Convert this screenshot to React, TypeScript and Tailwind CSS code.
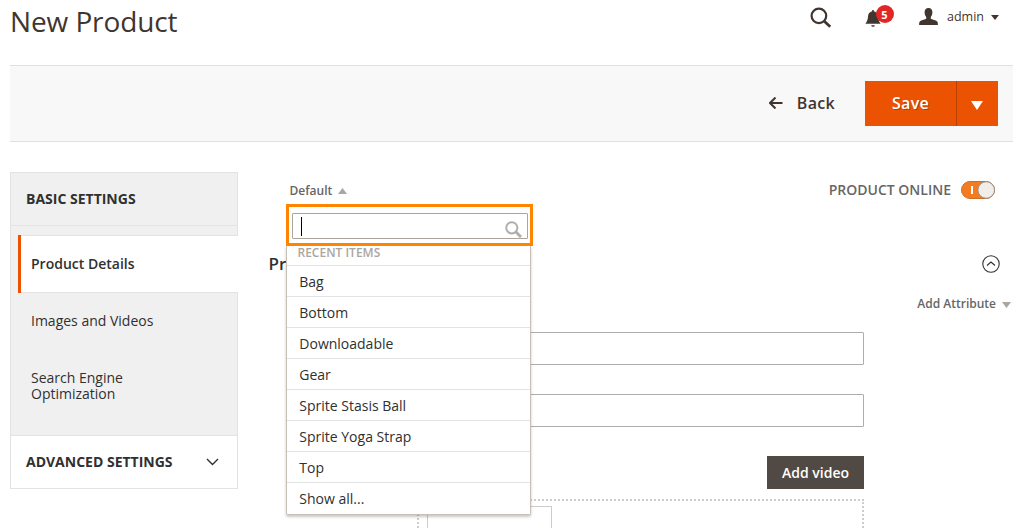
import React from "react";

const recentItems = [
  "Bag",
  "Bottom",
  "Downloadable",
  "Gear",
  "Sprite Stasis Ball",
  "Sprite Yoga Strap",
  "Top",
  "Show all...",
];

function Header() {
  return (
    <header className="flex h-[65px] items-start pl-[10px]">
      <h1 className="mt-px text-[28px] leading-[40px] tracking-[-0.1px] text-[#41362f]">New Product</h1>
      <div className="ml-auto flex items-start">
        <svg className="mt-[7px] h-[22px] w-[22px]" viewBox="0 0 22 22" fill="none" stroke="#41362f">
          <circle cx="8.900" cy="8.900" r="7.300" strokeWidth="2.200" />
          <path d="M14 14L20.200 19.800" strokeWidth="2.800" />
        </svg>
        <div className="relative ml-[33px] mt-[9px] h-[19px] w-[17px]">
          <svg className="h-[19px] w-[17px]" viewBox="0 0 17 19" fill="#41362f">
            <path d="M7.200 1h1.600v1.200c2.700.5 4 2.600 4.200 5.200.2 3 .8 4.800 2.600 7.400H.4c1.900-2.600 2.400-4.400 2.600-7.400.2-2.600 1.500-4.700 4.200-5.200z" />
            <path d="M6.200 16.300h3.600c-.3 1-.8 1.500-1.800 1.500s-1.500-.5-1.800-1.500z" />
          </svg>
          <span className="absolute left-[10.500px] top-[-4px] flex h-[18px] w-[18px] items-center justify-center rounded-full bg-[#e22626] text-[11px] font-bold leading-none text-white">
            5
          </span>
        </div>
        <svg className="ml-[37px] mt-[8px] h-[17px] w-[19px]" viewBox="0 0 19 17" fill="#41362f">
          <path d="M9.500 0c2.700 0 3.900 1.600 3.900 4.300 0 2.300-.7 3.700-1.600 4.700v1.800c.6.8 5.700 1.300 6.700 3.200.3.700.4 1.600.4 3H.1c0-1.400.1-2.300.4-3 1-1.900 6.100-2.400 6.700-3.200V9C6.300 8 5.600 6.600 5.600 4.300 5.600 1.600 6.800 0 9.500 0z" />
        </svg>
        <span className="ml-[9px] mt-[8px] text-[12.500px] leading-[18px] text-[#41362f]">admin</span>
        <svg className="ml-[7px] mr-[22px] mt-[15px] h-[5px] w-[8px]" viewBox="0 0 8 5" fill="#41362f">
          <path d="M0 0h8L4 5z" />
        </svg>
      </div>
    </header>
  );
}

function Toolbar() {
  return (
    <div className="ml-[10px] mr-[8px] flex h-[77px] items-center justify-end border-y border-[#e0e0e0] bg-[#f8f8f8] pr-[15px]">
      <button className="mb-[2px] mr-[30px] flex items-center text-[16px] font-semibold tracking-[0.3px] text-[#41362f]">
        <svg className="mr-[14px] h-[12px] w-[14px]" viewBox="0 0 14 12" fill="none" stroke="#41362f" strokeWidth="2">
          <path d="M0.500 6h13M6.500 0.500L1 6l5.500 5.500" />
        </svg>
        Back
      </button>
      <div className="flex h-[45px] bg-[#eb5202] text-white">
        <button className="w-[91px] pb-[2px] text-[16px] font-semibold tracking-[0.3px] [text-shadow:1px_1px_0_rgba(0,0,0,0.25)]">
          Save
        </button>
        <button className="flex w-[42px] items-center justify-center border-l border-[#b84002] pr-[2px]">
          <svg className="mt-[3px] h-[9px] w-[12px]" viewBox="0 0 12 9" fill="#fff">
            <path d="M0 0h12L6 9z" />
          </svg>
        </button>
      </div>
    </div>
  );
}

function Sidebar() {
  return (
    <nav className="ml-[10px] mt-[30px] flex h-[317px] w-[228px] flex-col text-[14px] text-[#303030]">
      <div className="flex h-[54px] items-center border border-[#e3e3e3] bg-[#f0f0f0] pb-[2px] pl-[15px] text-[14px] font-bold">
        BASIC SETTINGS
      </div>
      <div className="h-[9px] border-x border-[#e3e3e3] bg-[#f0f0f0]" />
      <div className="relative flex h-[57px] border-l border-[#e3e3e3] bg-[#f0f0f0] pl-[7px]">
        <div className="flex h-[58px] flex-1 items-center border-l-[3px] border-[#eb5202] bg-white pb-[2px] pl-[10px] font-semibold shadow-[inset_0_1px_0_#e3e3e3,inset_0_-1px_0_#e3e3e3]">
          Product Details
        </div>
      </div>
      <div className="flex-1 border-x border-[#e3e3e3] bg-[#f0f0f0] pl-[20px]">
        <div className="mt-[20px] leading-[18px]">Images and Videos</div>
        <div className="mt-[40px] w-[120px] leading-[16px]">Search Engine Optimization</div>
      </div>
      <div className="flex h-[54px] items-center border border-[#e3e3e3] bg-white pl-[15px] pr-[18px] text-[14px] font-bold">
        <span className="mb-[2px]">ADVANCED SETTINGS</span>
        <svg className="ml-auto h-[8px] w-[13px]" viewBox="0 0 13 8" fill="none" stroke="#303030" strokeWidth="1.400">
          <path d="M1 1l5.500 5.500L12 1" />
        </svg>
      </div>
    </nav>
  );
}

function AttributeSetMenu() {
  return (
    <div className="absolute left-[18px] top-[62px] w-[247px]">
      <div className="relative z-10 h-[42px] border-[3px] border-[#ff8400] bg-white px-[2px] pt-[6px] pl-[3px]">
        <div className="flex h-[26px] items-center rounded-[1px] border border-[#aaa49b] pl-[8px] pr-[5px]">
          <span className="h-[19px] w-px bg-black" />
          <svg className="ml-auto mt-[6px] h-[17px] w-[17px]" viewBox="0 0 17 17" fill="none" stroke="#b0aeaa">
            <circle cx="6.800" cy="6.800" r="5.600" strokeWidth="2" />
            <path d="M11 11l5 5" strokeWidth="3" />
          </svg>
        </div>
      </div>
      <div className="h-[269px] w-[245px] rounded-b-[2px] border border-t-0 border-[#c8c0b4] bg-white shadow-[0_2px_3px_rgba(0,0,0,0.22)]">
        <div className="h-[20px] border-b border-[#e3e3e3] pl-[10.500px] text-[12px] font-semibold leading-[14px] text-[#aaa6a0]">
          RECENT ITEMS
        </div>
        {recentItems.map((item) => (
          <div
            key={item}
            className="h-[31px] border-b border-[#e3e3e3] pl-[12.300px] text-[14px] leading-[31px] text-[#303030] last:border-b-0"
          >
            {item}
          </div>
        ))}
      </div>
    </div>
  );
}

function ProductForm() {
  return (
    <main className="relative ml-[30px] flex w-[745px] flex-col text-[#303030]">
      <div className="flex h-[96px] items-start">
        <button className="ml-[21.500px] mt-[40px] flex items-center text-[12px] font-semibold leading-[18px] text-[#666]">
          Default
          <svg className="ml-[6px] h-[6px] w-[9px]" viewBox="0 0 9 6" fill="#aaa6a0">
            <path d="M0 6h9L4.500 0z" />
          </svg>
        </button>
        <div className="ml-auto mr-[18px] mt-[39px] flex h-[18px] items-center text-[14px] font-semibold text-[#666]">
          <span className="mb-[2px]">PRODUCT ONLINE</span>
          <svg className="ml-[10px] h-[18px] w-[34px]" viewBox="0 0 34 18">
            <rect x="0.500" y="0.500" width="33" height="17" rx="8.500" fill="#f47b20" stroke="#cf6d24" />
            <rect x="10" y="5" width="2" height="8" fill="#fff" />
            <circle cx="25.200" cy="9" r="8.300" fill="#f1eee9" stroke="#96908a" />
          </svg>
        </div>
      </div>
      <div className="flex h-[50px] items-center">
        <h2 className="mt-[2px] pl-[0.500px] text-[17px] font-semibold">Pr</h2>
        <svg className="ml-auto mr-[13px] mt-px h-[18px] w-[18px]" viewBox="0 0 18 18" fill="none" stroke="#303030">
          <circle cx="9" cy="9" r="8.200" strokeWidth="1.100" />
          <path d="M5 10.500l4-3.500 4 3.500" strokeWidth="1.100" />
        </svg>
      </div>
      <div className="mr-[2px] flex h-[30px] items-center justify-end pt-[2px] text-[12px] font-semibold text-[#666]">
        Add Attribute
        <svg className="ml-[6px] mt-[2px] h-[6px] w-[9px]" viewBox="0 0 9 6" fill="#aaa6a0">
          <path d="M0 0h9L4.500 6z" />
        </svg>
      </div>
      <div className="mt-[14px] flex w-[596px] flex-col">
        <div className="ml-[149px] h-[33px] rounded-[1px] border border-[#adadad]" />
        <div className="ml-[149px] mt-[29px] h-[33px] rounded-[1px] border border-[#adadad]" />
        <button className="ml-auto mt-[29px] h-[33px] w-[97px] bg-[#514943] text-[14px] font-semibold text-white">
          Add video
        </button>
        <div className="ml-[149px] mt-[10px] h-[29px] border-2 border-b-0 border-dotted border-[#ccc] pl-[8px] pt-[5px]">
          <div className="h-[22px] w-[125px] border border-b-0 border-[#ccc]" />
        </div>
      </div>
      <AttributeSetMenu />
    </main>
  );
}

export default function App() {
  return (
    <div className="h-[528px] w-[1021px] overflow-hidden bg-white font-['Open_Sans',sans-serif]">
      <Header />
      <Toolbar />
      <div className="flex h-[386px] items-start">
        <Sidebar />
        <ProductForm />
      </div>
    </div>
  );
}
